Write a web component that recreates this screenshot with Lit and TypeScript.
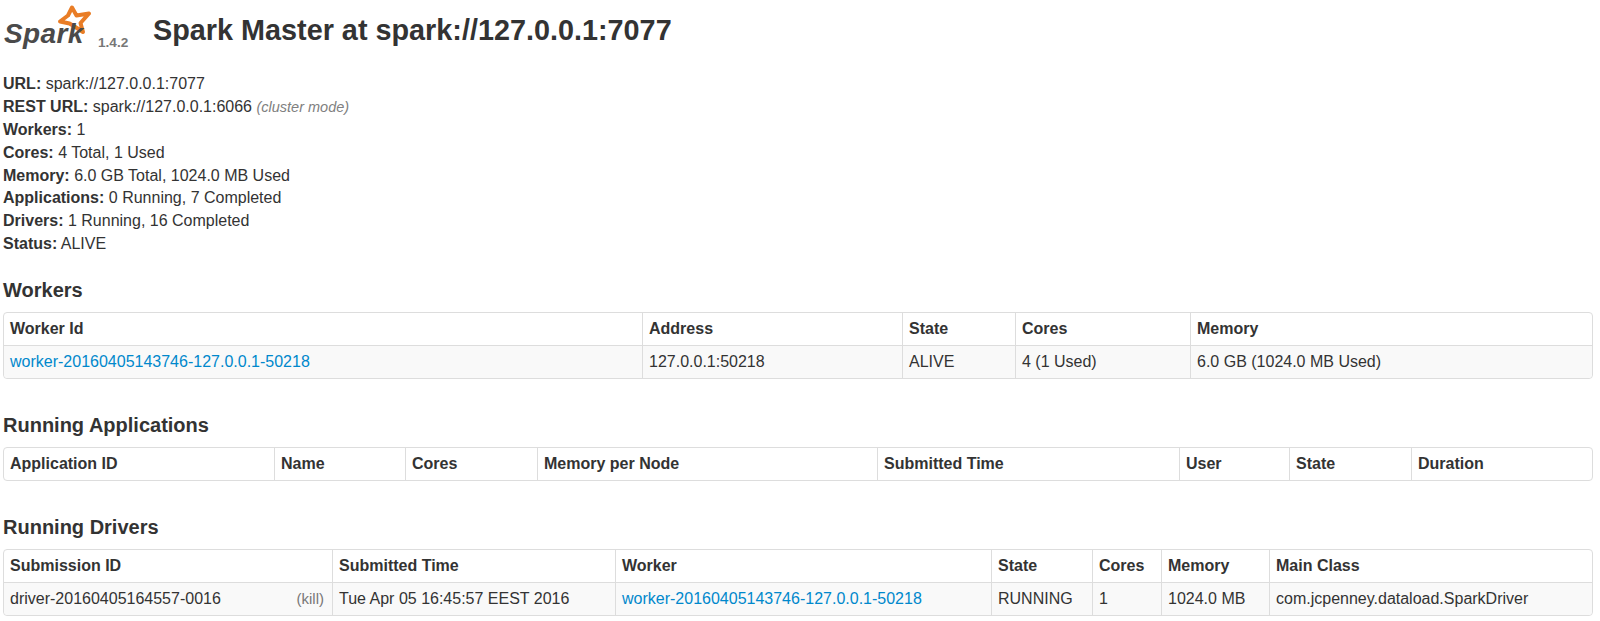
import { LitElement, html, css } from "lit";
import { customElement } from "lit/decorators.js";

type Cell = string | { link: string } | { driver: string };
interface Tbl { title: string; cols: number[]; head: string[]; rows: Cell[][] }

const WORKER = "worker-20160405143746-127.0.0.1-50218";
const tables: Tbl[] = [
  {
    title: "Workers",
    cols: [638, 260, 113, 175, 402],
    head: ["Worker Id", "Address", "State", "Cores", "Memory"],
    rows: [[{ link: WORKER }, "127.0.0.1:50218", "ALIVE", "4 (1 Used)", "6.0 GB (1024.0 MB Used)"]],
  },
  {
    title: "Running Applications",
    cols: [270, 131, 132, 340, 302, 110, 122, 181],
    head: ["Application ID", "Name", "Cores", "Memory per Node", "Submitted Time", "User", "State", "Duration"],
    rows: [],
  },
  {
    title: "Running Drivers",
    cols: [328, 283, 376, 101, 69, 108, 323],
    head: ["Submission ID", "Submitted Time", "Worker", "State", "Cores", "Memory", "Main Class"],
    rows: [[{ driver: "driver-20160405164557-0016" }, "Tue Apr 05 16:45:57 EEST 2016", { link: WORKER }, "RUNNING", "1", "1024.0 MB", "com.jcpenney.dataload.SparkDriver"]],
  },
];

const summary: [string, string, string?][] = [
  ["URL:", "spark://127.0.0.1:7077"],
  ["REST URL:", "spark://127.0.0.1:6066", "(cluster mode)"],
  ["Workers:", "1"],
  ["Cores:", "4 Total, 1 Used"],
  ["Memory:", "6.0 GB Total, 1024.0 MB Used"],
  ["Applications:", "0 Running, 7 Completed"],
  ["Drivers:", "1 Running, 16 Completed"],
  ["Status:", "ALIVE"],
];

@customElement("app-root")
export class AppRoot extends LitElement {
  static styles = css`
    :host {
      display: block;
      width: 1600px;
      height: 621px;
      overflow: hidden;
      background: #fff;
      color: #333;
      font-family: "Liberation Sans", Arial, sans-serif;
      font-size: 16px;
      line-height: 23px;
    }
    .page { padding: 0 8px 0 3px; }
    .head { display: flex; align-items: flex-start; height: 61px; }
    .logo { display: block; width: 95px; height: 52px; flex: none; }
    .logo-text { font: italic 700 28px "Liberation Sans", Arial, sans-serif; fill: #4a4a4a; letter-spacing: 0.4px; }
    .star { fill: none; stroke: #e97d26; stroke-width: 4; stroke-linejoin: round; }
    .version { font-size: 13.6px; font-weight: 700; color: #777; margin-top: 32px; width: 55px; flex: none; line-height: 22px; }
    h1 { margin: 10px 0 0; font-size: 28.8px; line-height: 40px; font-weight: 700; color: #333; white-space: nowrap; }
    ul { list-style: none; margin: 11px 0 0; padding: 0; }
    li { height: 22.9px; white-space: nowrap; }
    li b { font-weight: 700; }
    li em { color: #808080; font-size: 14.5px; }
    h4 { margin: 0; font-size: 20px; line-height: 24px; font-weight: 700; color: #333; }
    .sec1 { margin-top: 23px; }
    .sec2 { margin-top: 33.5px; }
    .sec3 { margin-top: 34.5px; }
    table {
      table-layout: fixed;
      width: 1588px;
      margin-top: 10px;
      border-collapse: separate;
      border-spacing: 0;
      border: 1px solid #ddd;
      border-radius: 4px;
    }
    th, td {
      text-align: left;
      padding: 0 6px;
      box-sizing: border-box;
      white-space: nowrap;
      border-left: 1px solid #ddd;
      font-size: 16px;
      line-height: 20px;
    }
    th { height: 32px; font-weight: 700; color: #333; }
    td { height: 33px; border-top: 1px solid #ddd; background: #f9f9f9; }
    th:first-child, td:first-child { border-left: 0; }
    tr:last-child td:first-child { border-bottom-left-radius: 4px; }
    tr:last-child td:last-child { border-bottom-right-radius: 4px; }
    a { color: #0088cc; text-decoration: none; }
    .driver { display: flex; justify-content: space-between; }
    .kill { color: #777; font-size: 15px; margin-right: 2px; }
  `;

  private cell(c: Cell) {
    if (typeof c === "string") return c;
    if ("link" in c) return html`<a href="#">${c.link}</a>`;
    return html`<div class="driver"><span>${c.driver}</span><span class="kill">(kill)</span></div>`;
  }

  render() {
    return html`
      <div class="page">
        <div class="head">
          <svg class="logo" viewBox="3 0 95 52" aria-label="Spark logo">
            <path class="star" d="M72 7.500 L76.500 15.500 L89 13.500 L80.500 23 L83 32 L74.500 26.500 L69.500 23.500 L60 21.500 L68 15.500 Z"/>
            <text class="logo-text" x="4" y="43">Spark</text>
          </svg>
          <span class="version">1.4.2</span>
          <h1>Spark Master at spark://127.0.0.1:7077</h1>
        </div>
        <ul>
          ${summary.map(([k, v, note]) => html`<li><b>${k}</b> ${v}${note ? html` <em>${note}</em>` : ""}</li>`)}
        </ul>
        ${tables.map((t, i) => html`
          <h4 class="sec${i + 1}">${t.title}</h4>
          <table>
            <colgroup>${t.cols.map((w) => html`<col style="width:${w}px" />`)}</colgroup>
            <thead><tr>${t.head.map((h) => html`<th>${h}</th>`)}</tr></thead>
            <tbody>${t.rows.map((r) => html`<tr>${r.map((c) => html`<td>${this.cell(c)}</td>`)}</tr>`)}</tbody>
          </table>
        `)}
      </div>
    `;
  }
}
